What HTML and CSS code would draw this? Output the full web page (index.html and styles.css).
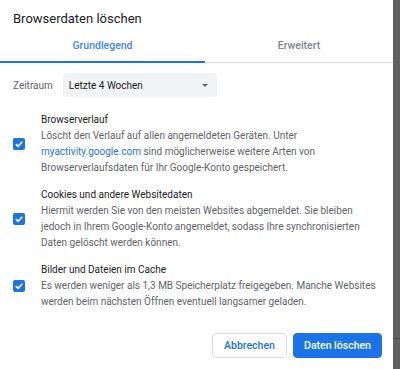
FILE: index.html
```html
<!DOCTYPE html>
<html lang="de">

<head>
    <meta charset="UTF-8">
    <meta name="viewport" content="width=device-width, initial-scale=1.0">
    <title>Browserdaten löschen</title>
    <link rel="stylesheet" href="styles.css">
</head>

<body>
    <div class="dialog">
        <div class="title">Browserdaten löschen</div>

        <div class="tabs">
            <div class="tab active">Grundlegend</div>
            <div class="tab">Erweitert</div>
        </div>

        <div class="range">
            <span class="range-label">Zeitraum</span>
            <div class="select">
                <span>Letzte 4 Wochen</span>
                <span class="arrow"></span>
            </div>
        </div>

        <div class="option first">
            <div class="check">
                <svg width="12" height="12" viewBox="0 0 12 12">
                    <rect width="12" height="12" rx="2" fill="#1a73e8"/>
                    <path d="M2.8 6.2 L5 8.3 L9.3 3.8" fill="none" stroke="#fff" stroke-width="1.6"/>
                </svg>
            </div>
            <div class="option-text">
                <div class="option-title">Browserverlauf</div>
                <div class="option-desc">Löscht den Verlauf auf allen angemeldeten Geräten. Unter <span class="link">myactivity.google.com</span> sind möglicherweise weitere Arten von Browserverlaufsdaten für Ihr Google-Konto gespeichert.</div>
            </div>
        </div>

        <div class="option">
            <div class="check">
                <svg width="12" height="12" viewBox="0 0 12 12">
                    <rect width="12" height="12" rx="2" fill="#1a73e8"/>
                    <path d="M2.8 6.2 L5 8.3 L9.3 3.8" fill="none" stroke="#fff" stroke-width="1.6"/>
                </svg>
            </div>
            <div class="option-text">
                <div class="option-title">Cookies und andere Websitedaten</div>
                <div class="option-desc">Hiermit werden Sie von den meisten Websites abgemeldet. Sie bleiben jedoch in Ihrem Google-Konto angemeldet, sodass Ihre synchronisierten Daten gelöscht werden können.</div>
            </div>
        </div>

        <div class="option">
            <div class="check">
                <svg width="12" height="12" viewBox="0 0 12 12">
                    <rect width="12" height="12" rx="2" fill="#1a73e8"/>
                    <path d="M2.8 6.2 L5 8.3 L9.3 3.8" fill="none" stroke="#fff" stroke-width="1.6"/>
                </svg>
            </div>
            <div class="option-text">
                <div class="option-title">Bilder und Dateien im Cache</div>
                <div class="option-desc">Es werden weniger als 1,3 MB Speicherplatz freigegeben. Manche Websites werden beim nächsten Öffnen eventuell langsamer geladen.</div>
            </div>
        </div>

        <div class="buttons">
            <button type="button" class="btn btn-cancel">Abbrechen</button>
            <button type="button" class="btn btn-primary">Daten löschen</button>
        </div>
    </div>
    <div class="backdrop"></div>
</body>

</html>
```

FILE: styles.css
```css
body {
    font-family: Roboto, "Liberation Sans", sans-serif;
    margin: 0;
    display: flex;
    width: 400px;
    height: 369px;
    overflow: hidden;
    background-color: #fff;
}

.dialog {
    width: 393px;
    height: 369px;
    background-color: #fff;
    display: flex;
    flex-direction: column;
}

.backdrop {
    flex: 1;
    background: linear-gradient(to bottom, #5f5f5f 338px, #4c4c4c 338px, #4c4c4c 339px, #5f5f5f 339px);
}

.title {
    font-size: 13px;
    line-height: 20px;
    color: #202124;
    padding: 9px 13px 0;
}

.tabs {
    display: flex;
    margin-top: 1px;
    border-bottom: 1px solid #dadce0;
}

.tab {
    font-size: 10.5px;
    font-weight: 500;
    color: #80868b;
    text-align: center;
    line-height: 16px;
    padding: 8px 0 8px;
    flex: 1;
}

.tab.active {
    flex: none;
    width: 205px;
    color: #4285f4;
    border-bottom: 2px solid #1a73e8;
    margin-bottom: -1px;
    padding-bottom: 7px;
}

.range {
    display: flex;
    align-items: center;
    gap: 10px;
    padding: 10px 13px 0;
}

.range-label {
    font-size: 10px;
    color: #5f6368;
}

.select {
    width: 154px;
    height: 24px;
    box-sizing: border-box;
    background-color: #f1f3f4;
    border-radius: 4px;
    display: flex;
    align-items: center;
    justify-content: space-between;
    padding: 0 9px 0 6px;
    font-size: 10px;
    color: #202124;
}

.arrow {
    width: 0;
    height: 0;
    border-left: 3px solid transparent;
    border-right: 3px solid transparent;
    border-top: 3px solid #5f6368;
}

.option {
    display: flex;
    align-items: center;
    padding: 0 14px 0 13px;
    margin-top: 11px;
}

.option.first {
    margin-top: 15px;
}

.check {
    width: 28px;
    flex: none;
    display: flex;
}

.option-text {
    font-size: 10px;
    line-height: 16px;
}

.option-title {
    color: #202124;
}

.option-desc {
    color: #5f6368;
}

.link {
    color: #1a73e8;
}

.buttons {
    display: flex;
    justify-content: flex-end;
    gap: 6px;
    padding: 0 11px;
    margin-top: 23px;
}

.btn {
    font-family: Roboto, "Liberation Sans", sans-serif;
    font-size: 10.5px;
    font-weight: 500;
    height: 25px;
    border-radius: 4px;
    padding: 0;
    white-space: nowrap;
    cursor: pointer;
}

.btn-cancel {
    background-color: #fff;
    border: 1px solid #dadce0;
    color: #1a73e8;
    width: 75px;
}

.btn-primary {
    background-color: #1a73e8;
    border: 1px solid #1a73e8;
    color: #fff;
    width: 89px;
}
```
